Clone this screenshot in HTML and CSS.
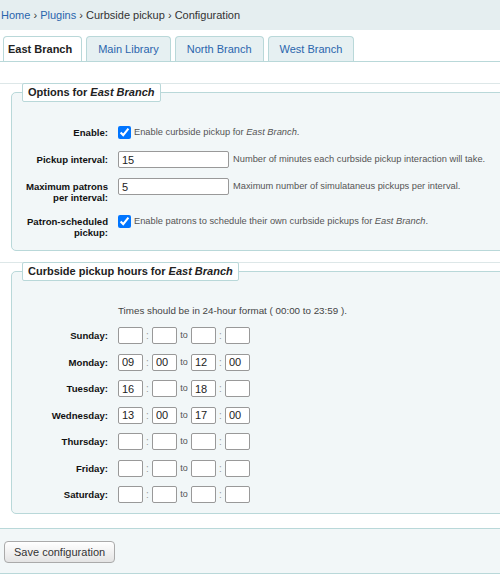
FILE: index.html
```html
<!DOCTYPE html>
<html>
<head>
    <meta charset="utf-8">
    <link rel="stylesheet" href="styles.css">
</head>
<body>
<div class="page">

    <div id="breadcrumbs"><a href="#">Home</a> › <a href="#">Plugins</a> › Curbside pickup › Configuration</div>

    <ul class="tabs">
        <li class="active">East Branch</li>
        <li><a href="#">Main Library</a></li>
        <li><a href="#">North Branch</a></li>
        <li><a href="#">West Branch</a></li>
    </ul>

    <form>
        <div class="block">
            <fieldset class="rows">
                <legend>Options for <i>East Branch</i></legend>
                <div class="row">
                    <label>Enable:</label>
                    <input type="checkbox" checked>
                    <span class="hint">Enable curbside pickup for <i>East Branch</i>.</span>
                </div>
                <div class="row">
                    <label>Pickup interval:</label>
                    <input type="text" class="wide" value="15">
                    <span class="hint">Number of minutes each curbside pickup interaction will take.</span>
                </div>
                <div class="row">
                    <label>Maximum patrons per interval:</label>
                    <input type="text" class="wide" value="5">
                    <span class="hint">Maximum number of simulataneus pickups per interval.</span>
                </div>
                <div class="row">
                    <label>Patron-scheduled pickup:</label>
                    <input type="checkbox" checked>
                    <span class="hint">Enable patrons to schedule their own curbside pickups for <i>East Branch</i>.</span>
                </div>
            </fieldset>
        </div>

        <div class="block">
            <fieldset class="rows hours">
                <legend>Curbside pickup hours for <i>East Branch</i></legend>
                <p class="note">Times should be in 24-hour format ( 00:00 to 23:59 ).</p>
                <div class="row">
                    <label>Sunday:</label>
                    <input type="text" class="time"><span class="sep">:</span><input type="text" class="time"><span class="to">to</span><input type="text" class="time"><span class="sep">:</span><input type="text" class="time">
                </div>
                <div class="row">
                    <label>Monday:</label>
                    <input type="text" class="time" value="09"><span class="sep">:</span><input type="text" class="time" value="00"><span class="to">to</span><input type="text" class="time" value="12"><span class="sep">:</span><input type="text" class="time" value="00">
                </div>
                <div class="row">
                    <label>Tuesday:</label>
                    <input type="text" class="time" value="16"><span class="sep">:</span><input type="text" class="time"><span class="to">to</span><input type="text" class="time" value="18"><span class="sep">:</span><input type="text" class="time">
                </div>
                <div class="row">
                    <label>Wednesday:</label>
                    <input type="text" class="time" value="13"><span class="sep">:</span><input type="text" class="time" value="00"><span class="to">to</span><input type="text" class="time" value="17"><span class="sep">:</span><input type="text" class="time" value="00">
                </div>
                <div class="row">
                    <label>Thursday:</label>
                    <input type="text" class="time"><span class="sep">:</span><input type="text" class="time"><span class="to">to</span><input type="text" class="time"><span class="sep">:</span><input type="text" class="time">
                </div>
                <div class="row">
                    <label>Friday:</label>
                    <input type="text" class="time"><span class="sep">:</span><input type="text" class="time"><span class="to">to</span><input type="text" class="time"><span class="sep">:</span><input type="text" class="time">
                </div>
                <div class="row">
                    <label>Saturday:</label>
                    <input type="text" class="time"><span class="sep">:</span><input type="text" class="time"><span class="to">to</span><input type="text" class="time"><span class="sep">:</span><input type="text" class="time">
                </div>
            </fieldset>
        </div>

        <fieldset class="action">
            <button type="button">Save configuration</button>
        </fieldset>
    </form>

</div>
</body>
</html>
```

FILE: styles.css
```css
html, body{
    margin: 0px;
    background: #fff;
}
body{
    font-family: "Liberation Sans", Arial, sans-serif;
    font-size: 11px;
    color: #222;
}
.page{
    width: 500px;
    height: 577px;
    overflow: hidden;
}

/* breadcrumb bar */
#breadcrumbs{
    height: 30px;
    line-height: 30px;
    padding-left: 1px;
    background: #e5eef0;
    color: #333;
}
#breadcrumbs a{
    color: #2a65ad;
    text-decoration: none;
}

/* tabs */
.tabs{
    display: flex;
    gap: 4px;
    list-style: none;
    margin: 6px 0 21px 0;
    padding: 0 0 0 3px;
    height: 25px;
    border-bottom: 1px solid #b9d8d9;
}
.tabs li{
    height: 24px;
    line-height: 24px;
    padding: 0 11px;
    border: 1px solid #b9d8d9;
    border-bottom: none;
    border-radius: 4px 4px 0 0;
    background: #e6f0f2;
}
.tabs li a{
    color: #2a65ad;
    text-decoration: none;
}
.tabs li.active{
    padding: 0 9px 0 4px;
    background: #fff;
    font-weight: bold;
    color: #222;
}

/* form blocks */
.block{
    border-top: 1px solid #dde7e8;
    margin-top: 11px;
}
.block:first-child{
    margin-top: 0;
}
fieldset.rows{
    margin: -1px -30px 0 11px;
    padding: 22px 0 2px 10px;
    border: 1px solid #b9d8d9;
    border-radius: 5px;
    background: #f2f7f8;
}
fieldset.rows legend{
    padding: 2px 5px;
    line-height: 13px;
    border: 1px solid #b9d8d9;
    border-radius: 2px;
    background: #fff;
    font-weight: bold;
    color: #222;
}
.row{
    display: flex;
    align-items: flex-start;
    min-height: 17px;
    margin-bottom: 10px;
}
.row label{
    flex: 0 0 86px;
    margin-right: 10px;
    padding-top: 3px;
    line-height: 11px;
    font-size: 9.6px;
    font-weight: bold;
    text-align: right;
    color: #111;
}
.row input[type=checkbox]{
    width: 13px;
    height: 13px;
    margin: 2px 0 0 0;
}
.row input[type=text]{
    box-sizing: border-box;
    height: 17px;
    margin: 0;
    padding: 0 3px;
    border: 1px solid #999;
    border-radius: 2px;
    background: #fff;
    font-family: "Liberation Sans", Arial, sans-serif;
    font-size: 11px;
    color: #222;
}
.row input.wide{
    width: 111px;
}
.hint{
    margin-left: 4px;
    padding-top: 3px;
    line-height: 11px;
    font-size: 9.3px;
    color: #555;
    white-space: nowrap;
}
.row input[type=checkbox] + .hint{
    margin-left: 3px;
}

/* hours */
fieldset.hours{
    padding-top: 24px;
    padding-bottom: 0px;
}
.note{
    margin: 0 0 10px 96px;
    line-height: 12px;
    font-size: 9.8px;
    color: #444;
}
.hours .row{
    margin-bottom: 9.5px;
}
.row input.time{
    width: 25px;
}
.sep{
    width: 9px;
    line-height: 17px;
    font-size: 10px;
    text-align: center;
    color: #999;
}
.to{
    width: 14px;
    line-height: 17px;
    font-size: 9px;
    text-align: center;
    color: #555;
}

/* save bar */
fieldset.action{
    margin: 14px 0 0 0;
    padding: 12px 0 10px 4px;
    border: none;
    border-top: 1px solid #b9d8d9;
    border-bottom: 1px solid #b9d8d9;
    background: #f2f7f8;
}
fieldset.action button{
    height: 22px;
    padding: 0 9px;
    border: 1px solid #aaa;
    border-radius: 4px;
    background: linear-gradient(#ffffff, #e4e4e4);
    font-family: "Liberation Sans", Arial, sans-serif;
    font-size: 11px;
    color: #333;
}
```
